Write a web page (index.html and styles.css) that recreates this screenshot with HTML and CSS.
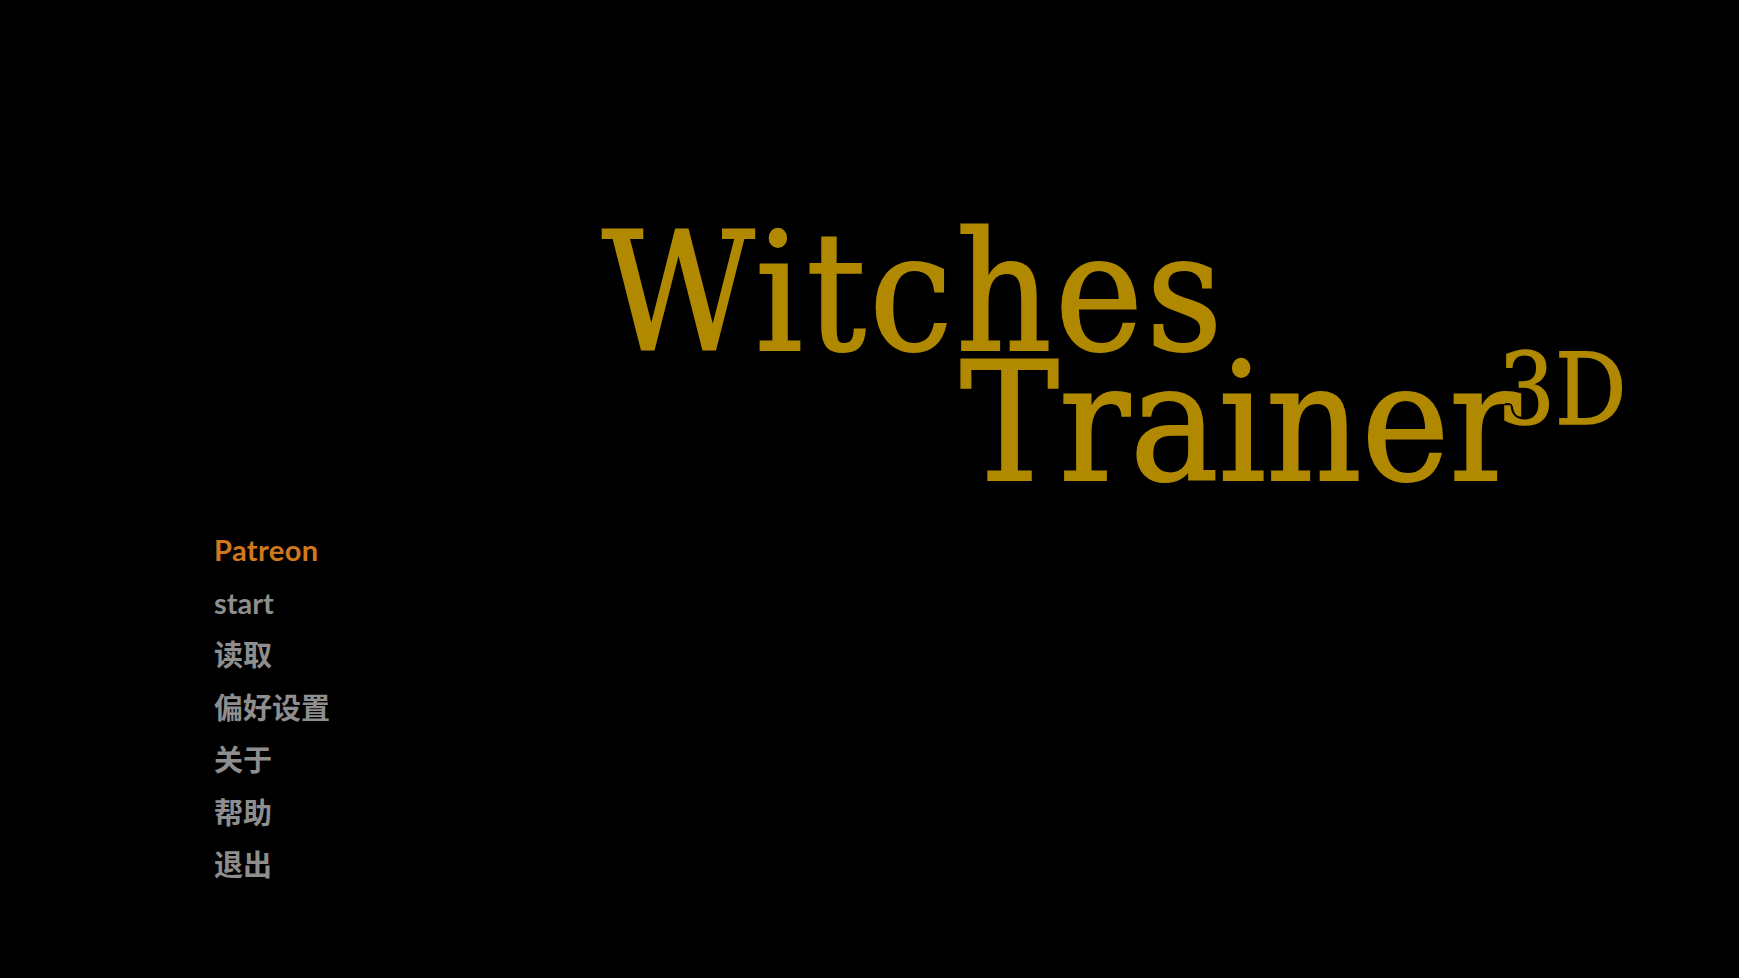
FILE: index.html
```html
<!DOCTYPE html>
<html lang="zh">
<head>
<meta charset="utf-8">
<title>Witches Trainer 3D</title>
<link rel="stylesheet" href="styles.css">
</head>
<body>
<div class="screen">
  <div class="title">
    <div class="title-line first">Witches</div>
    <div class="title-line second">Trainer<span class="sup">3D</span></div>
  </div>
  <nav class="menu">
    <a class="item accent">Patreon</a>
    <a class="item">start</a>
    <a class="item">读取</a>
    <a class="item">偏好设置</a>
    <a class="item">关于</a>
    <a class="item">帮助</a>
    <a class="item">退出</a>
  </nav>
</div>
</body>
</html>
```

FILE: styles.css
```css
html, body {
  margin: 0;
  padding: 0;
  background: #000;
}
.screen {
  width: 1739px;
  height: 978px;
  background: #000;
  overflow: hidden;
  padding-top: 228px;
  box-sizing: border-box;
}
.title {
  margin-left: 602px;
  font-family: "DejaVu Serif", "Liberation Serif", serif;
  font-stretch: condensed;
  font-size: 165px;
  line-height: 130px;
  color: #b08900;
  -webkit-text-stroke: 2px #b08900;
  white-space: nowrap;
}
.title-line.first {
  letter-spacing: 3.5px;
}
.title-line.second {
  padding-left: 358px;
}
.sup {
  font-size: 99px;
  line-height: 0;
  vertical-align: 56px;
  margin-left: -22px;
  -webkit-text-stroke: 1.5px #b08900;
  text-shadow: 3px 0 0 #000, -3px 0 0 #000, 0 3px 0 #000, 0 -3px 0 #000,
    2px 2px 0 #000, -2px -2px 0 #000, 2px -2px 0 #000, -2px 2px 0 #000;
}
.menu {
  margin-top: 36px;
  margin-left: 214px;
  display: flex;
  flex-direction: column;
  font-family: "Lato", "Noto Sans CJK SC", sans-serif;
  font-weight: 700;
  font-size: 29px;
  line-height: 52.5px;
}
.item {
  color: #8e8e8e;
  text-decoration: none;
}
.item.accent {
  color: #d0781c;
  letter-spacing: 0.4px;
}
```
